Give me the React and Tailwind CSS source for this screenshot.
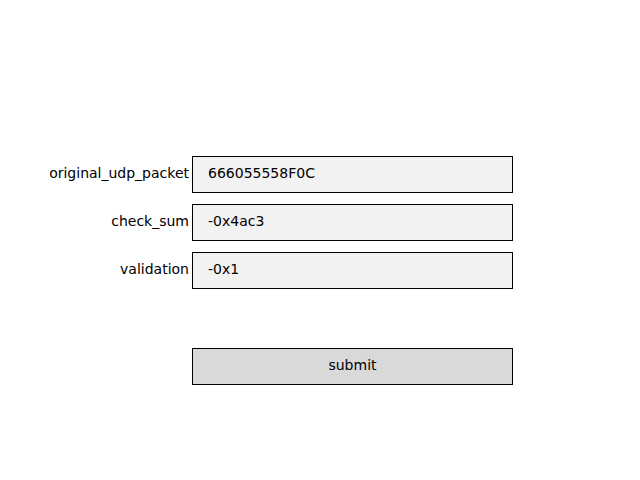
export default function App() {
  const rows = [
    ["original_udp_packet", "666055558F0C"],
    ["check_sum", "-0x4ac3"],
    ["validation", "-0x1"],
  ];
  return (
    <div className="w-[640px] h-[480px] bg-white pt-[156px] flex flex-col text-[14px] text-black" style={{ fontFamily: '"DejaVu Sans", sans-serif' }}>
      <div className="flex flex-col gap-[11px]">
        {rows.map(([l, v]) => (
          <div key={l} className="flex items-center h-[37px] pb-[2px]">
            <div className="w-[192px] pr-[3px] text-right">{l}</div>
            <div className="w-[321px] h-[37px] border border-black bg-[#f2f2f2] flex items-center pl-[15px] pb-[2px] -mb-[2px]">{v}</div>
          </div>
        ))}
      </div>
      <div className="flex mt-[59px]">
        <div className="w-[192px]" />
        <div className="w-[321px] h-[37px] border border-black bg-[#d9d9d9] flex items-center justify-center pb-[2px]">submit</div>
      </div>
    </div>
  );
}
